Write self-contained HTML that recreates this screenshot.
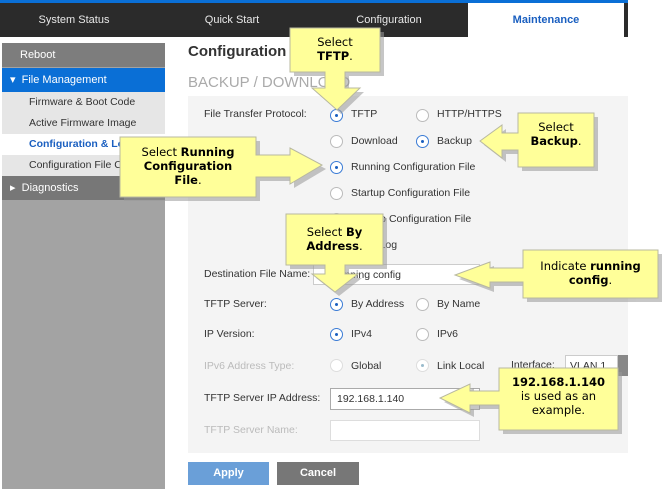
<!DOCTYPE html>
<html><head><style>
*{margin:0;padding:0;box-sizing:border-box}
body{width:669px;height:489px;position:relative;overflow:hidden;background:#fff;font-family:"Liberation Sans",Arial,sans-serif;font-size:11px;color:#333}
.a{position:absolute}
.top{left:0;top:0;width:628px;height:3px;background:#0a6fd6}
.bar{left:0;top:3px;width:628px;height:34px;background:#2b2b2b}
.tab{top:3px;height:34px;line-height:34px;text-align:center;color:#e8e8e8;font-size:11px}
.side{left:2px;top:43px;width:163px;height:446px;background:#a3a3a3}
.si{left:2px;width:163px;height:24px;line-height:24px;color:#fff;font-size:11px}
.sub{left:2px;width:163px;height:21px;line-height:21px;padding-left:27px;color:#333;background:#e6e6e6;font-size:10.5px}
.lab{left:204px;font-size:10.5px;color:#333}
.dis{color:#bbb}
.r{width:13px;height:13px;border:1px solid #bbb;border-radius:50%;background:#fff}
.r.on{border-color:#3a7bd5}
.r.on::after{content:"";position:absolute;left:4px;top:4px;width:3px;height:3px;border-radius:50%;background:#1a5fc0}
.r.dr{border-color:#ddd}.r.dr.on::after{background:#9bc}
.t{font-size:10.5px;color:#333}
.inp{background:#fff;border:1px solid #ccc}
.ct{font-family:"DejaVu Sans",Verdana,sans-serif;font-size:11.5px;color:#000;text-align:center;line-height:14px}
</style></head><body>
<div class="a top"></div><div class="a bar"></div>
<div class="a tab" style="left:0;width:148px">System Status</div>
<div class="a tab" style="left:158px;width:148px">Quick Start</div>
<div class="a tab" style="left:315px;width:148px">Configuration</div>
<div class="a" style="left:468px;top:3px;width:156px;height:35px;background:#fff;color:#1a5fc0;font-weight:bold;text-align:center;line-height:34px">Maintenance</div>
<div class="a side"></div>
<div class="a si" style="top:43px;background:#7d7d7d;padding-left:18px">Reboot</div>
<div class="a si" style="top:68px;background:#0a6fd6;padding-left:8px">▾&nbsp; File Management</div>
<div class="a sub" style="top:92px">Firmware &amp; Boot Code</div>
<div class="a sub" style="top:113px">Active Firmware Image</div>
<div class="a sub" style="top:134px;background:#fff;color:#1a5fc0;font-weight:bold">Configuration &amp; Log</div>
<div class="a sub" style="top:155px">Configuration File Copy</div>
<div class="a si" style="top:176px;background:#777;padding-left:8px">▸&nbsp; Diagnostics</div>
<div class="a" style="left:188px;top:43px;font-size:15px;font-weight:bold;color:#333">Configuration &amp; Log</div>
<div class="a" style="left:188px;top:74px;font-size:15px;color:#aaa">BACKUP / DOWNLOAD</div>
<div class="a" style="left:188px;top:96px;width:440px;height:357px;background:#f4f4f4"></div>
<div class="a lab" style="top:108px">File Transfer Protocol:</div>
<div class="a r on" style="left:330px;top:109px"></div><div class="a t" style="left:351px;top:108px">TFTP</div>
<div class="a r" style="left:416px;top:109px"></div><div class="a t" style="left:437px;top:108px">HTTP/HTTPS</div>
<div class="a r" style="left:330px;top:135px"></div><div class="a t" style="left:351px;top:135px">Download</div>
<div class="a r on" style="left:416px;top:135px"></div><div class="a t" style="left:437px;top:135px">Backup</div>
<div class="a r on" style="left:330px;top:161px"></div><div class="a t" style="left:351px;top:161px">Running Configuration File</div>
<div class="a r" style="left:330px;top:187px"></div><div class="a t" style="left:351px;top:187px">Startup Configuration File</div>
<div class="a r" style="left:330px;top:213px"></div><div class="a t" style="left:351px;top:213px">Backup Configuration File</div>
<div class="a r" style="left:330px;top:239px"></div><div class="a t" style="left:351px;top:239px">Flash Log</div>
<div class="a lab" style="top:268px">Destination File Name:</div>
<div class="a inp" style="left:313px;top:264px;width:167px;height:21px"></div><div class="a t" style="left:335px;top:269px">running config</div>
<div class="a lab" style="top:298px">TFTP Server:</div>
<div class="a r on" style="left:330px;top:298px"></div><div class="a t" style="left:351px;top:298px">By Address</div>
<div class="a r" style="left:416px;top:298px"></div><div class="a t" style="left:437px;top:298px">By Name</div>
<div class="a lab" style="top:328px">IP Version:</div>
<div class="a r on" style="left:330px;top:328px"></div><div class="a t" style="left:351px;top:328px">IPv4</div>
<div class="a r" style="left:416px;top:328px"></div><div class="a t" style="left:437px;top:328px">IPv6</div>
<div class="a lab dis" style="top:360px">IPv6 Address Type:</div>
<div class="a r dr" style="left:330px;top:359px"></div><div class="a t dis" style="left:351px;top:360px">Global</div>
<div class="a r dr on" style="left:416px;top:359px"></div><div class="a t dis" style="left:437px;top:360px">Link Local</div>
<div class="a t dis" style="left:511px;top:359px">Interface:</div>
<div class="a inp" style="left:565px;top:355px;width:53px;height:21px"></div><div class="a t dis" style="left:570px;top:360px">VLAN 1</div>
<div class="a" style="left:618px;top:355px;width:10px;height:21px;background:#888"></div>
<div class="a lab" style="top:392px">TFTP Server IP Address:</div>
<div class="a inp" style="left:330px;top:388px;width:150px;height:22px;border-color:#aaa"></div><div class="a t" style="left:337px;top:393px">192.168.1.140</div>
<div class="a lab dis" style="top:424px">TFTP Server Name:</div>
<div class="a inp" style="left:330px;top:420px;width:150px;height:21px;border-color:#ddd"></div>
<div class="a" style="left:188px;top:462px;width:81px;height:23px;background:#6a9fd8;color:#fff;font-weight:bold;text-align:center;line-height:23px">Apply</div>
<div class="a" style="left:277px;top:462px;width:82px;height:23px;background:#777;color:#fff;font-weight:bold;text-align:center;line-height:23px">Cancel</div>
<svg class="a" style="left:0;top:0" width="669" height="489">
<g fill="#999" opacity="0.55" transform="translate(4,4)">
<polygon points="290,28 380,72 290,72"/><rect x="290" y="28" width="90" height="44"/><polygon points="325,72 345,72 345,88 360,88 337,110 312,88 325,88"/>
<rect x="120" y="137" width="136" height="60"/><polygon points="256,155 290,155 290,148 322,165 290,184 290,177 256,177"/>
<rect x="518" y="113" width="76" height="54"/><polygon points="518,133 502,133 502,125 480,141 502,158 502,150 518,150"/>
<rect x="286" y="214" width="97" height="51"/><polygon points="325,265 345,265 345,274 358,274 335,292 312,274 325,274"/>
<rect x="523" y="250" width="135" height="48"/><polygon points="523,268 490,268 490,262 455,275 490,288 490,282 523,282"/>
<rect x="499" y="368" width="119" height="62"/><polygon points="499,391 470,391 470,384 440,398 470,413 470,405 499,405"/>
</g>
<g fill="#ffff99" stroke="#b8b8a0" stroke-width="1">
<path d="M290,28H380V72H345V88H360L337,110L312,88H325V72H290Z"/>
<path d="M120,137H256V155H290V148L322,165L290,184V177H256V197H120Z"/>
<path d="M518,113H594V167H518V150H502V158L480,141L502,125V133H518Z"/>
<path d="M286,214H383V265H345V274H358L335,292L312,274H325V265H286Z"/>
<path d="M523,250H658V298H523V282H490V288L455,275L490,262V268H523Z"/>
<path d="M499,368H618V430H499V405H470V413L440,398L470,384V391H499Z"/>
</g>
</svg>
<div class="a ct" style="left:290px;top:35px;width:90px">Select<br><b>TFTP</b>.</div>
<div class="a ct" style="left:120px;top:145px;width:136px">Select <b>Running Configuration</b><br><b>File</b>.</div>
<div class="a ct" style="left:518px;top:120px;width:76px">Select<br><b>Backup</b>.</div>
<div class="a ct" style="left:286px;top:225px;width:97px">Select <b>By<br>Address</b>.</div>
<div class="a ct" style="left:523px;top:259px;width:135px">Indicate <b>running<br>config</b>.</div>
<div class="a ct" style="left:499px;top:375px;width:119px"><b>192.168.1.140</b><br>is used as an<br>example.</div>
</body></html>
